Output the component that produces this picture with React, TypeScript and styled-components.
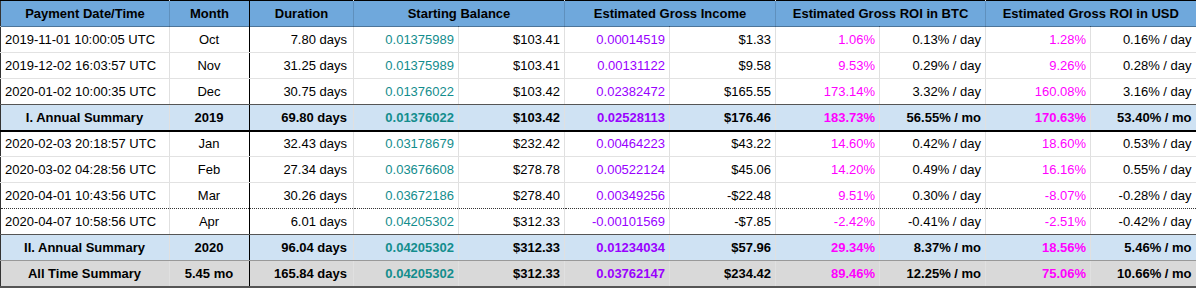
import React from "react";
import styled, { createGlobalStyle, css } from "styled-components";

const Global = createGlobalStyle`
  html, body { margin: 0; padding: 0; background: #fff; }
  body { font-family: "Liberation Sans", Arial, sans-serif; }
`;

type Tone = "plain" | "teal" | "purple" | "magenta";
type Kind = "data" | "annual" | "total";

const toneColor: Record<Tone, string> = {
  plain: "#000000",
  teal: "#138d8d",
  purple: "#9900ff",
  magenta: "#ff00ff",
};

const kindBg: Record<Kind, string> = {
  data: "#ffffff",
  annual: "#cfe2f3",
  total: "#d9d9d9",
};

const Sheet = styled.table`
  width: 1196px;
  table-layout: fixed;
  border-collapse: collapse;
  font-size: 13px;
  line-height: 15px;
  color: #000;
  border-top: 1px solid #000;
  border-left: 1px solid #333;
  border-right: 2px solid #444;
`;

const Row = styled.tr<{ $kind: Kind; $below: string }>`
  height: 26px;
  background: ${(p) => kindBg[p.$kind]};
  font-weight: ${(p) => (p.$kind === "data" ? 400 : 700)};
  & > td {
    border-bottom: ${(p) => p.$below};
  }
`;

const HeadRow = styled.tr`
  height: 26px;
  background: #6fa8dc;
`;

const HeadCell = styled.th<{ $strong?: boolean }>`
  padding: 0 4px;
  text-align: center;
  font-weight: 700;
  white-space: nowrap;
  border-right: 1px solid ${(p) => (p.$strong ? "#000" : "rgba(0,0,0,0.14)")};
  border-bottom: 1px solid rgba(0, 0, 0, 0.3);
`;

const Cell = styled.td<{ $align: "left" | "center" | "right"; $tone: Tone; $strong?: boolean; $pad?: number }>`
  padding: 0 ${(p) => p.$pad ?? 4}px 0 ${(p) => (p.$align === "left" ? 4 : 3)}px;
  text-align: ${(p) => p.$align};
  color: ${(p) => toneColor[p.$tone]};
  white-space: nowrap;
  overflow: hidden;
  vertical-align: middle;
  border-right: 1px solid ${(p) => (p.$strong ? "#000" : "rgba(0,0,0,0.12)")};
  ${(p) =>
    p.$strong &&
    css`
      border-right-color: #000;
    `}
`;

type Line = {
  kind: Kind;
  below: string;
  cols: string[];
};

const grid = "1px solid #e2e2e2";

const lines: Line[] = [
  { kind: "data", below: grid, cols: ["2019-11-01 10:00:05 UTC", "Oct", "7.80 days", "0.01375989", "$103.41", "0.00014519", "$1.33", "1.06%", "0.13% / day", "1.28%", "0.16% / day"] },
  { kind: "data", below: grid, cols: ["2019-12-02 16:03:57 UTC", "Nov", "31.25 days", "0.01375989", "$103.41", "0.00131122", "$9.58", "9.53%", "0.29% / day", "9.26%", "0.28% / day"] },
  { kind: "data", below: "1px solid #555", cols: ["2020-01-02 10:00:35 UTC", "Dec", "30.75 days", "0.01376022", "$103.42", "0.02382472", "$165.55", "173.14%", "3.32% / day", "160.08%", "3.16% / day"] },
  { kind: "annual", below: "2px solid #000", cols: ["I. Annual Summary", "2019", "69.80 days", "0.01376022", "$103.42", "0.02528113", "$176.46", "183.73%", "56.55% / mo", "170.63%", "53.40% / mo"] },
  { kind: "data", below: grid, cols: ["2020-02-03 20:18:57 UTC", "Jan", "32.43 days", "0.03178679", "$232.42", "0.00464223", "$43.22", "14.60%", "0.42% / day", "18.60%", "0.53% / day"] },
  { kind: "data", below: grid, cols: ["2020-03-02 04:28:56 UTC", "Feb", "27.34 days", "0.03676608", "$278.78", "0.00522124", "$45.06", "14.20%", "0.49% / day", "16.16%", "0.55% / day"] },
  { kind: "data", below: "1px dotted #333", cols: ["2020-04-01 10:43:56 UTC", "Mar", "30.26 days", "0.03672186", "$278.40", "0.00349256", "-$22.48", "9.51%", "0.30% / day", "-8.07%", "-0.28% / day"] },
  { kind: "data", below: "1px solid #555", cols: ["2020-04-07 10:58:56 UTC", "Apr", "6.01 days", "0.04205302", "$312.33", "-0.00101569", "-$7.85", "-2.42%", "-0.41% / day", "-2.51%", "-0.42% / day"] },
  { kind: "annual", below: "1px solid #999", cols: ["II. Annual Summary", "2020", "96.04 days", "0.04205302", "$312.33", "0.01234034", "$57.96", "29.34%", "8.37% / mo", "18.56%", "5.46% / mo"] },
  { kind: "total", below: "2px solid #555", cols: ["All Time Summary", "5.45 mo", "165.84 days", "0.04205302", "$312.33", "0.03762147", "$234.42", "89.46%", "12.25% / mo", "75.06%", "10.66% / mo"] },
];

const widths = [169, 80, 104, 105, 106, 105, 106, 104, 106, 105, 106];
const tones: Tone[] = ["plain", "plain", "plain", "teal", "plain", "purple", "plain", "magenta", "plain", "magenta", "plain"];

export default function App() {
  return (
    <>
      <Global />
      <Sheet>
        <colgroup>
          {widths.map((w, i) => (
            <col key={i} style={{ width: w }} />
          ))}
        </colgroup>
        <thead>
          <HeadRow>
            <HeadCell>Payment Date/Time</HeadCell>
            <HeadCell $strong>Month</HeadCell>
            <HeadCell>Duration</HeadCell>
            <HeadCell colSpan={2}>Starting Balance</HeadCell>
            <HeadCell colSpan={2}>Estimated Gross Income</HeadCell>
            <HeadCell colSpan={2}>Estimated Gross ROI in BTC</HeadCell>
            <HeadCell colSpan={2}>Estimated Gross ROI in USD</HeadCell>
          </HeadRow>
        </thead>
        <tbody>
          {lines.map((line, r) => (
            <Row key={r} $kind={line.kind} $below={line.below}>
              {line.cols.map((text, c) => {
                const align =
                  c === 1 || (c === 0 && line.kind !== "data") ? "center" : c === 0 ? "left" : "right";
                return (
                  <Cell key={c} $align={align} $tone={tones[c]} $strong={c === 1} $pad={c === 2 ? 6 : 4}>
                    {text}
                  </Cell>
                );
              })}
            </Row>
          ))}
        </tbody>
      </Sheet>
    </>
  );
}
